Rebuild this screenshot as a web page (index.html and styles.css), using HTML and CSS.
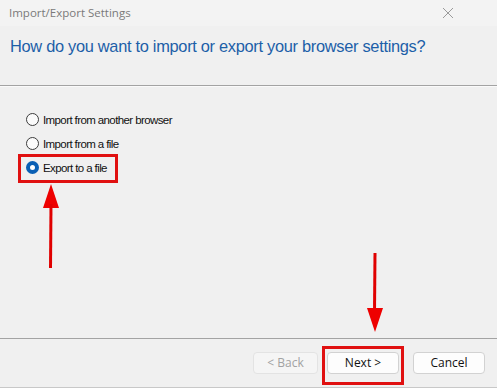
FILE: index.html
```html
<!DOCTYPE html>
<html>
<head>
    <title>Import/Export Settings</title>
    <link rel="stylesheet" href="styles.css">
</head>
<body>
    <div class="window">
        <div class="title-bar">
            <span class="title">Import/Export Settings</span>
            <svg class="close" width="12" height="12" viewBox="0 0 12 12">
                <path d="M1 1 L11 11 M11 1 L1 11" stroke="#9a9a9a" stroke-width="1" fill="none"/>
            </svg>
        </div>

        <div class="header">
            <h1>How do you want to import or export your browser settings?</h1>
        </div>

        <div class="content">
            <label class="option"><span class="radio"></span>Import from another browser</label>
            <label class="option"><span class="radio"></span>Import from a file</label>
            <label class="option"><span class="radio checked"></span>Export to a file</label>
        </div>

        <div class="footer">
            <button class="btn disabled">&lt; Back</button>
            <button class="btn">Next &gt;</button>
            <button class="btn cancel">Cancel</button>
        </div>

        <!-- annotations drawn over the dialog -->
        <div class="mark mark-export"></div>
        <div class="mark mark-next"></div>
        <svg class="arrow arrow-up" width="20" height="86" viewBox="0 0 20 86">
            <path d="M10 0 L18 24 L2 24 Z" fill="#ee0000"/>
            <line x1="10" y1="20" x2="9.5" y2="84" stroke="#e00000" stroke-width="3"/>
        </svg>
        <svg class="arrow arrow-down" width="20" height="82" viewBox="0 0 20 82">
            <line x1="10" y1="1" x2="9.5" y2="60" stroke="#e00000" stroke-width="3"/>
            <path d="M2 56 L18 56 L10 80 Z" fill="#ee0000"/>
        </svg>
    </div>
</body>
</html>
```

FILE: styles.css
```css
body {
    margin: 0;
    padding: 0;
    background: #f0f0f0;
}

.window {
    position: relative;
    width: 497px;
    height: 388px;
    display: flex;
    flex-direction: column;
    background: #f0f0f0;
    font-family: 'Liberation Sans', Arial, sans-serif;
    overflow: hidden;
}

.title-bar {
    height: 25px;
    flex-shrink: 0;
    display: flex;
    align-items: center;
    justify-content: space-between;
    padding: 0 43px 1px 9px;
    background: #f3f3f3;
}

.title {
    font-family: 'Open Sans', sans-serif;
    font-size: 11.5px;
    color: #7a7a7a;
}

.header {
    height: 59px;
    flex-shrink: 0;
    border-bottom: 1px solid #a3a3a3;
    box-shadow: 0 1px 0 #fafafa;
}

.header h1 {
    margin: 0;
    padding: 11px 0 0 10px;
    font-size: 16.4px;
    font-weight: normal;
    letter-spacing: -0.3px;
    color: #1d5fa8;
}

.content {
    flex: 1;
    display: flex;
    flex-direction: column;
    align-items: flex-start;
    gap: 11px;
    padding: 27px 0 0 26px;
    border-bottom: 1px solid #a3a3a3;
}

.option {
    display: flex;
    align-items: center;
    gap: 4px;
    height: 13px;
    font-family: 'Liberation Sans', Arial, sans-serif;
    font-size: 11.5px;
    letter-spacing: -0.6px;
    color: #111;
}

.radio {
    width: 11px;
    height: 11px;
    border: 1px solid #3c3c3c;
    border-radius: 50%;
    background: #fbfbfb;
}

.radio.checked {
    width: 5px;
    height: 5px;
    border: 4px solid #0a5fb4;
    background: #ffffff;
}

.footer {
    height: 47px;
    flex-shrink: 0;
    display: flex;
    align-items: center;
    justify-content: flex-end;
    gap: 9px;
    padding: 0 12px 1px 0;
    border-bottom: 1px solid #c8c8c8;
}

.btn {
    width: 72px;
    height: 22px;
    padding: 0;
    font-family: 'Open Sans', sans-serif;
    font-size: 12px;
    color: #111;
    background: #fdfdfd;
    border: 1px solid #d2d2d2;
    border-radius: 4px;
}

.btn.disabled {
    width: 65px;
    color: #a2a2a2;
    background: #f5f5f5;
    border-color: #e3e3e3;
}

.btn.cancel {
    margin-left: 5px;
}

.mark {
    position: absolute;
    border: 3px solid #e01010;
}

.mark-export {
    left: 18px;
    top: 154px;
    width: 94px;
    height: 23px;
}

.mark-next {
    left: 322px;
    top: 346px;
    width: 76px;
    height: 33px;
}

.arrow {
    position: absolute;
}

.arrow-up {
    left: 41px;
    top: 184px;
}

.arrow-down {
    left: 365px;
    top: 252px;
}
```
